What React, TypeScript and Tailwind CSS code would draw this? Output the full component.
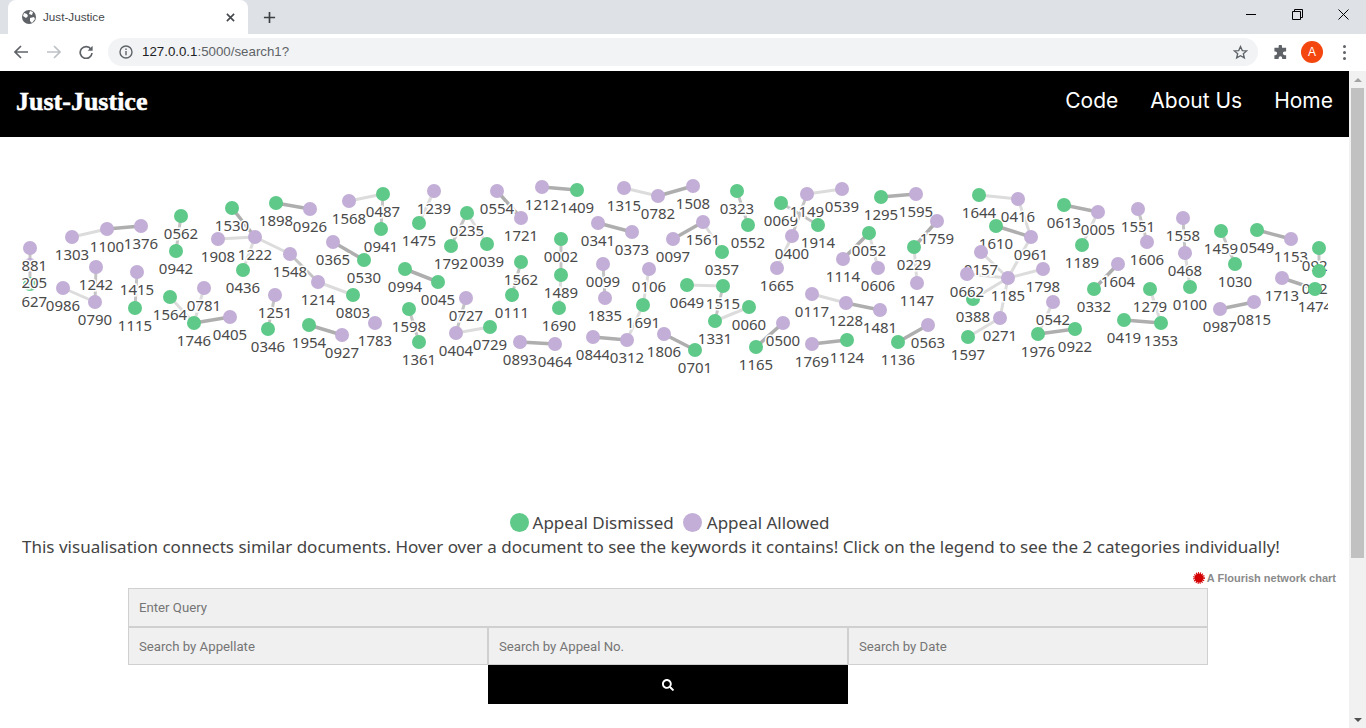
import { FaSearch } from "react-icons/fa";

type Kind = "g" | "p";

// id, x, y, category
const nodes: [string, number, number, Kind][] = [
  ["0627", 30, 284, "g"], ["1205", 30, 265, "p"], ["0881", 30, 248, "p"],
  ["1303", 72, 237, "p"], ["1100", 107, 229, "p"], ["1376", 141, 226, "p"],
  ["0562", 181, 216, "g"], ["0942", 176, 251, "g"], ["1242", 96, 267, "p"],
  ["0790", 95, 302, "p"], ["0986", 63, 288, "p"], ["1415", 137, 272, "p"],
  ["1115", 135, 308, "g"], ["1564", 170, 297, "g"], ["1746", 194, 323, "g"],
  ["0781", 204, 288, "p"], ["0405", 230, 317, "p"], ["1530", 232, 208, "g"],
  ["1222", 255, 237, "p"], ["1908", 218, 239, "p"], ["0436", 243, 270, "g"],
  ["1548", 290, 254, "p"], ["1214", 318, 282, "p"], ["1898", 276, 203, "g"],
  ["0926", 310, 209, "p"], ["1251", 275, 295, "p"], ["0346", 268, 329, "g"],
  ["1954", 309, 325, "g"], ["0927", 342, 335, "p"], ["0365", 333, 242, "p"],
  ["1568", 349, 201, "p"], ["0487", 383, 194, "g"], ["0941", 381, 229, "g"],
  ["0530", 364, 260, "g"], ["0803", 353, 295, "g"], ["1783", 375, 323, "p"],
  ["1239", 434, 191, "p"], ["1475", 419, 223, "g"], ["0235", 467, 213, "g"],
  ["1792", 451, 246, "g"], ["0039", 487, 244, "g"], ["0994", 405, 269, "g"],
  ["0045", 438, 282, "g"], ["1598", 409, 309, "g"], ["1361", 419, 342, "g"],
  ["0727", 466, 298, "p"], ["0404", 456, 333, "p"], ["0729", 490, 327, "g"],
  ["0554", 497, 191, "p"], ["1721", 521, 218, "p"], ["1562", 521, 262, "g"],
  ["0111", 512, 295, "g"], ["1212", 542, 187, "p"], ["1409", 577, 190, "g"],
  ["0002", 561, 239, "g"], ["1489", 561, 275, "g"], ["1690", 559, 308, "g"],
  ["0893", 520, 342, "p"], ["0464", 555, 344, "p"], ["0341", 598, 223, "p"],
  ["0373", 632, 232, "p"], ["0099", 603, 264, "p"], ["1835", 605, 298, "p"],
  ["0844", 593, 337, "p"], ["0312", 627, 340, "p"], ["1315", 624, 188, "p"],
  ["0782", 658, 196, "p"], ["0106", 649, 269, "p"], ["1691", 643, 305, "g"],
  ["1806", 664, 334, "p"], ["0097", 673, 239, "p"], ["1508", 693, 186, "p"],
  ["0323", 737, 191, "g"], ["0552", 748, 225, "g"], ["1561", 703, 222, "p"],
  ["0357", 722, 252, "g"], ["0649", 687, 285, "g"], ["1515", 723, 286, "g"],
  ["0060", 749, 307, "g"], ["1331", 715, 321, "g"], ["0701", 695, 350, "g"],
  ["0500", 783, 323, "p"], ["1165", 756, 347, "g"], ["0069", 781, 203, "g"],
  ["1149", 807, 194, "p"], ["0539", 842, 189, "p"], ["1914", 818, 225, "g"],
  ["0400", 792, 236, "p"], ["1665", 777, 268, "p"], ["0117", 812, 294, "p"],
  ["1228", 846, 303, "p"], ["1481", 880, 310, "p"], ["1769", 812, 344, "p"],
  ["1124", 847, 340, "g"], ["0052", 869, 233, "g"], ["1114", 843, 259, "p"],
  ["0606", 878, 268, "p"], ["1295", 881, 197, "g"], ["1595", 916, 194, "p"],
  ["1759", 937, 221, "p"], ["0229", 914, 247, "g"], ["1147", 917, 283, "p"],
  ["1136", 898, 342, "g"], ["0563", 928, 325, "p"], ["1644", 979, 195, "g"],
  ["0416", 1018, 199, "p"], ["1610", 996, 226, "g"], ["0157", 981, 252, "p"],
  ["0388", 973, 299, "g"], ["0662", 967, 274, "p"], ["1185", 1008, 278, "p"],
  ["0271", 1000, 318, "p"], ["1597", 968, 337, "g"], ["0961", 1031, 237, "p"],
  ["1798", 1043, 269, "p"], ["0542", 1053, 302, "p"], ["1976", 1038, 334, "g"],
  ["0922", 1075, 329, "g"], ["0613", 1064, 205, "g"], ["0005", 1098, 212, "p"],
  ["1189", 1082, 245, "g"], ["1604", 1118, 264, "p"], ["0332", 1094, 289, "g"],
  ["1551", 1138, 209, "p"], ["1606", 1147, 242, "p"], ["1279", 1150, 289, "g"],
  ["0419", 1124, 320, "g"], ["1353", 1161, 323, "g"], ["1558", 1183, 218, "p"],
  ["0468", 1185, 253, "p"], ["0100", 1190, 287, "g"], ["0987", 1220, 309, "p"],
  ["0815", 1254, 302, "p"], ["1459", 1221, 231, "g"], ["1030", 1235, 264, "g"],
  ["0549", 1257, 230, "g"], ["1153", 1291, 239, "p"], ["0921", 1319, 248, "g"],
  ["0022", 1319, 271, "g"], ["1713", 1282, 278, "p"], ["1474", 1315, 289, "g"],
];

// source, target, strength: 0 light, 1 medium, 2 dark
const edges: [string, string, number][] = [
  ["0881", "1205", 1], ["1205", "0627", 1], ["1303", "1100", 0], ["1100", "1376", 2],
  ["0562", "0942", 1], ["1242", "0790", 1], ["0986", "0790", 0], ["1415", "1115", 1],
  ["1564", "1746", 0], ["0781", "1746", 0], ["1746", "0405", 2], ["1530", "1222", 2],
  ["1908", "1222", 0], ["1222", "0436", 0], ["1222", "1548", 0], ["1548", "1214", 1],
  ["1214", "0803", 0], ["1898", "0926", 2], ["1251", "0346", 1], ["1954", "0927", 2],
  ["0365", "0530", 2], ["1568", "0487", 0], ["0487", "0941", 1], ["1239", "1475", 0],
  ["0235", "1792", 1], ["0235", "0039", 0], ["0994", "0045", 2], ["1598", "1361", 1],
  ["0727", "0404", 1], ["0404", "0729", 0], ["0554", "1721", 2], ["1562", "0111", 1],
  ["1212", "1409", 2], ["0002", "1489", 1], ["1489", "1690", 0], ["0893", "0464", 2],
  ["0341", "0373", 2], ["0099", "1835", 1], ["0844", "0312", 2], ["1315", "0782", 0],
  ["0782", "1508", 2], ["0106", "1691", 0], ["1691", "0312", 0], ["1806", "0701", 2],
  ["0097", "1561", 2], ["1561", "0357", 0], ["0323", "0552", 1], ["0649", "1515", 0],
  ["1515", "1331", 1], ["1331", "0060", 0], ["0500", "1165", 2], ["0069", "1914", 1],
  ["1149", "0539", 0], ["1149", "0400", 1], ["0400", "1665", 0], ["0117", "1228", 0],
  ["1228", "1481", 2], ["1769", "1124", 2], ["0052", "1114", 2], ["0052", "0606", 0],
  ["1295", "1595", 2], ["1759", "0229", 2], ["0229", "1147", 0], ["1136", "0563", 2],
  ["1644", "0416", 0], ["1610", "0961", 2], ["0416", "0961", 0], ["0157", "1185", 0],
  ["0662", "1185", 0], ["1185", "0388", 0], ["1185", "0271", 0], ["1185", "0961", 0],
  ["1185", "1798", 0], ["0271", "1597", 0], ["0542", "1976", 0], ["1976", "0922", 2],
  ["0613", "0005", 2], ["0005", "1189", 0], ["1604", "0332", 2], ["1551", "1606", 1],
  ["1279", "1353", 0], ["0419", "1353", 2], ["1558", "0468", 1], ["0468", "0100", 0],
  ["0987", "0815", 2], ["1459", "1030", 1], ["0549", "1153", 2], ["1713", "1474", 2],
  ["0921", "0022", 1],
];

const positions = new Map(nodes.map((n) => [n[0], n]));
const edgeColors = ["#dcdcdc", "#c4c4c4", "#aeaeae"];

const NetworkChart = () => (
  <svg viewBox="0 137 1349 375" className="block w-[1349px] h-[375px]">
    <defs>
      <clipPath id="chart-clip">
        <rect x="22" y="137" width="1306" height="375" />
      </clipPath>
    </defs>
    <g clipPath="url(#chart-clip)">
      {edges.map(([a, b, s]) => {
        const from = positions.get(a)!;
        const to = positions.get(b)!;
        return (
          <line
            key={a + b}
            x1={from[1]}
            y1={from[2]}
            x2={to[1]}
            y2={to[2]}
            stroke={edgeColors[s]}
            strokeWidth={s === 2 ? 3.5 : 3}
          />
        );
      })}
      {nodes.map(([id, x, y, kind]) => (
        <g key={id}>
          <circle cx={x} cy={y} r="7" fill={kind === "g" ? "#5ec988" : "#c2aed6"} />
          <text
            x={x}
            y={y + 22.5}
            textAnchor="middle"
            fill="#4a4a4a"
            stroke="#ffffff"
            strokeWidth="3"
            className="text-[15px] [paint-order:stroke]"
          >
            {id}
          </text>
        </g>
      ))}
    </g>
  </svg>
);

const BrowserChrome = () => (
  <div className="font-['Liberation_Sans',sans-serif]">
    {/* Tab strip */}
    <div className="h-[34px] bg-[#dee1e6] flex items-end pl-2">
      <div className="w-[240px] h-[34px] bg-white rounded-t-lg flex items-center pl-[13px] pr-[13px]">
        <svg viewBox="0 0 16 16" className="w-[16px] h-[16px] shrink-0">
          <circle cx="8" cy="8" r="7" fill="#5f6368" />
          <path d="M3 4l3 1 1 2-2 2-3-2zM9 2l3 1-1 3-3-1zM9 9l4-1 1 2-3 4-2-2z" fill="#ffffff" />
        </svg>
        <span className="ml-[6px] text-[11.7px] text-[#45484c] flex-1">Just-Justice</span>
        <svg viewBox="0 0 10 10" className="w-[9px] h-[9px]" stroke="#45484c" strokeWidth="1.8">
          <path d="M1 1l8 8M9 1l-8 8" />
        </svg>
      </div>
      <div className="h-[34px] flex items-center ml-[15px]">
        <svg viewBox="0 0 14 14" className="w-[13px] h-[13px]" stroke="#3c4043" strokeWidth="1.8">
          <path d="M7 1v12M1 7h12" />
        </svg>
      </div>
      <div className="flex-1" />
      <div className="h-[34px] flex items-start">
        <div className="w-[46px] h-[28px] flex items-center justify-center">
          <div className="w-[10px] h-px bg-black" />
        </div>
        <div className="w-[46px] h-[28px] flex items-center justify-center">
          <svg viewBox="0 0 11 11" className="w-[11px] h-[11px]" fill="none" stroke="#000000">
            <path d="M.5 2.5h8v8h-8zM2.5 2.5v-2h8v8h-2" />
          </svg>
        </div>
        <div className="w-[46px] h-[28px] flex items-center justify-center">
          <svg viewBox="0 0 11 11" className="w-[11px] h-[11px]" stroke="#000000">
            <path d="M.5.5l10 10M10.5.5l-10 10" />
          </svg>
        </div>
      </div>
    </div>
    {/* Toolbar */}
    <div className="h-[37px] bg-white flex items-center pb-[1px]">
      <div className="w-[108px] flex items-center pl-[14px] gap-[18.500px]">
        <svg viewBox="0 0 14 14" className="w-[14px] h-[14px]" fill="none" stroke="#5f6368" strokeWidth="1.7">
          <path d="M14 7H1.500M7 1L1 7l6 6" />
        </svg>
        <svg viewBox="0 0 14 14" className="w-[14px] h-[14px]" fill="none" stroke="#bdc1c6" strokeWidth="1.7">
          <path d="M0 7h12.500M7 1l6 6-6 6" />
        </svg>
        <svg viewBox="0 0 14 14" className="w-[14px] h-[14px]" fill="none" stroke="#5f6368" strokeWidth="1.7">
          <path d="M12 4.200A5.900 5.900 0 1 0 13 8" />
          <path d="M13.600 .8v5h-5z" fill="#5f6368" stroke="none" />
        </svg>
      </div>
      <div className="w-[1150px] h-[28px] bg-[#f1f3f4] rounded-full flex items-center pl-[11px] pr-[10px]">
        <svg viewBox="0 0 14 14" className="w-[14px] h-[14px]" fill="none" stroke="#5f6368" strokeWidth="1.400">
          <circle cx="7" cy="7" r="6" />
          <path d="M7 6v4.200M7 3.600v1.300" />
        </svg>
        <span className="ml-[9px] text-[13.3px] text-[#202124] flex-1">
          127.0.0.1<span className="text-[#5f6368]">:5000/search1?</span>
        </span>
        <svg viewBox="0 0 16 16" className="w-[15px] h-[15px]" fill="none" stroke="#5f6368" strokeWidth="1.400">
          <path d="M8 1.600l1.900 4.300 4.600.4-3.500 3 1.100 4.500L8 11.400l-4.100 2.400L5 9.300l-3.500-3 4.600-.4z" />
        </svg>
      </div>
      <div className="flex-1 flex items-center pl-[15px]">
        <svg viewBox="0 0 16 16" className="w-[15px] h-[15px]" fill="#5f6368">
          <path d="M6 1.500a1.800 1.800 0 0 1 3.600 0V3H14v4h-1.600a1.900 1.900 0 0 0 0 3.800H14V15H9.800v-1.200a1.900 1.900 0 0 0-3.800 0V15H1.500v-4.200h1a1.900 1.900 0 0 0 0-3.800h-1V3H6z" />
        </svg>
        <div className="ml-[13px] w-[22px] h-[22px] rounded-full bg-[#f4460f] text-white text-xs flex items-center justify-center">
          A
        </div>
        <div className="ml-[20px] flex flex-col gap-[3px]">
          <div className="w-[3px] h-[3px] rounded-full bg-[#5f6368]" />
          <div className="w-[3px] h-[3px] rounded-full bg-[#5f6368]" />
          <div className="w-[3px] h-[3px] rounded-full bg-[#5f6368]" />
        </div>
      </div>
    </div>
  </div>
);

const Scrollbar = () => (
  <div className="w-[17px] bg-[#f1f1f1] flex flex-col items-center">
    <div className="h-[17px] flex items-center justify-center">
      <div className="w-0 h-0 border-x-[4px] border-x-transparent border-b-[4px] border-b-[#a3a3a3]" />
    </div>
    <div className="w-[13px] h-[470px] bg-[#c1c1c1]" />
    <div className="flex-1" />
    <div className="h-[17px] flex items-center justify-center">
      <div className="w-0 h-0 border-x-[4px] border-x-transparent border-t-[4px] border-t-[#505050]" />
    </div>
  </div>
);

const inputClass =
  "bg-[#f0f0f0] border border-[#d0d0d0] px-[10px] text-[13.2px] font-['Roboto',sans-serif] text-[#555555] placeholder:text-[#757575] outline-none";

export default function App() {
  return (
    <div className="h-[728px] w-[1366px] overflow-hidden bg-white">
      <BrowserChrome />
      <div className="flex h-[657px]">
        <main className="w-[1349px] overflow-hidden">
          <header className="bg-black h-[66px] flex items-center justify-between pl-[16px] pr-[16px]">
            <a className="text-white text-[26px] font-bold pb-[5px] [-webkit-text-stroke:0.5px_white] font-['Liberation_Serif',serif]">
              Just-Justice
            </a>
            <nav className="flex items-center gap-[32px] pb-[6px] text-white text-[21px] font-['Inter',sans-serif]">
              <a>Code</a>
              <a>About Us</a>
              <a>Home</a>
            </nav>
          </header>

          <section className="font-['Noto_Sans',sans-serif] text-[#444444]">
            <NetworkChart />
            <div className="h-[22px] -mt-[1px] pr-[10px] flex items-center justify-center text-[17px] leading-none">
              <span className="w-[19px] h-[19px] rounded-full bg-[#5ec988]" />
              <span className="ml-[4px]">Appeal Dismissed</span>
              <span className="ml-[9px] w-[19px] h-[19px] rounded-full bg-[#c2aed6]" />
              <span className="ml-[5px]">Appeal Allowed</span>
            </div>
            <p className="h-[28px] pl-[22px] text-[17.03px] leading-[28px] whitespace-nowrap">
              This visualisation connects similar documents. Hover over a document to see the keywords it contains! Click on the legend to see the 2 categories individually!
            </p>
          </section>

          <div className="h-[27px] pr-[13px] pb-[3px] flex items-end justify-end gap-[2px]">
            <svg viewBox="0 0 12 12" className="w-[12px] h-[12px] mb-[1px]">
              <circle cx="6" cy="6" r="4.500" fill="#d40000" />
              <circle cx="6" cy="6" r="5" fill="none" stroke="#d40000" strokeWidth="1.800" strokeDasharray="1 1" />
            </svg>
            <span className="text-[11px] leading-[14px] font-bold text-[#8a8a8a] font-['Liberation_Sans',sans-serif]">
              A Flourish network chart
            </span>
          </div>

          <form className="w-[1080px] ml-[128px] flex flex-col">
            <input placeholder="Enter Query" className={`${inputClass} h-[39px] w-full`} />
            <div className="flex">
              <input placeholder="Search by Appellate" className={`${inputClass} h-[38px] w-[360px]`} />
              <input placeholder="Search by Appeal No." className={`${inputClass} h-[38px] w-[360px]`} />
              <input placeholder="Search by Date" className={`${inputClass} h-[38px] w-[360px]`} />
            </div>
            <div className="flex justify-center">
              <button type="button" className="w-[360px] h-[39px] bg-black flex items-center justify-center">
                <FaSearch className="text-white w-[12px] h-[12px]" />
              </button>
            </div>
          </form>
        </main>
        <Scrollbar />
      </div>
    </div>
  );
}
